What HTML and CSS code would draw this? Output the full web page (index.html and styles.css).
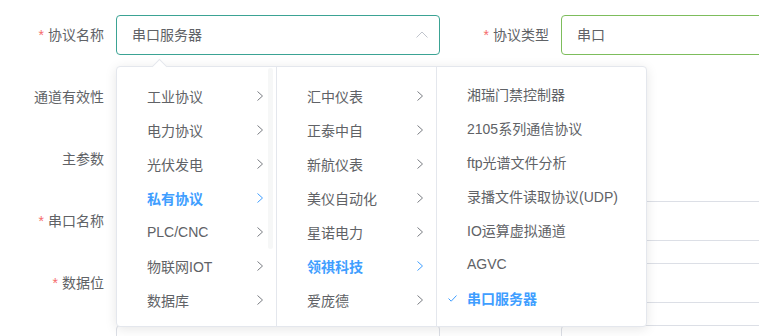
FILE: index.html
```html
<!DOCTYPE html>
<html lang="zh">
<head>
    <meta charset="UTF-8">
    <meta name="viewport" content="width=device-width, initial-scale=1.0">
    <title>协议配置</title>
    <link rel="stylesheet" href="styles.css">
</head>
<body>
    <form class="form">
        <div class="form-row">
            <div class="form-item">
                <label class="label required">协议名称</label>
                <div class="control">
                    <div class="input select is-open">
                        <span class="value">串口服务器</span>
                        <svg class="select-arrow" width="12" height="7" viewBox="0 0 12 7"><polyline points="0.5,6.5 6,1 11.5,6.5" fill="none" stroke="currentColor" stroke-width="1"/></svg>
                    </div>

                    <!-- 级联下拉面板 -->
                    <div class="cascader-panel">
                        <div class="popper-arrow"></div>
                        <ul class="menu">
                            <li class="item"><span>工业协议</span><svg class="chevron" width="6" height="10" viewBox="0 0 6 10"><polyline points="0.5,0.5 5.5,5 0.5,9.5" fill="none" stroke="currentColor" stroke-width="1"/></svg></li>
                            <li class="item"><span>电力协议</span><svg class="chevron" width="6" height="10" viewBox="0 0 6 10"><polyline points="0.5,0.5 5.5,5 0.5,9.5" fill="none" stroke="currentColor" stroke-width="1"/></svg></li>
                            <li class="item"><span>光伏发电</span><svg class="chevron" width="6" height="10" viewBox="0 0 6 10"><polyline points="0.5,0.5 5.5,5 0.5,9.5" fill="none" stroke="currentColor" stroke-width="1"/></svg></li>
                            <li class="item active"><span>私有协议</span><svg class="chevron" width="6" height="10" viewBox="0 0 6 10"><polyline points="0.5,0.5 5.5,5 0.5,9.5" fill="none" stroke="currentColor" stroke-width="1"/></svg></li>
                            <li class="item"><span>PLC/CNC</span><svg class="chevron" width="6" height="10" viewBox="0 0 6 10"><polyline points="0.5,0.5 5.5,5 0.5,9.5" fill="none" stroke="currentColor" stroke-width="1"/></svg></li>
                            <li class="item"><span>物联网IOT</span><svg class="chevron" width="6" height="10" viewBox="0 0 6 10"><polyline points="0.5,0.5 5.5,5 0.5,9.5" fill="none" stroke="currentColor" stroke-width="1"/></svg></li>
                            <li class="item"><span>数据库</span><svg class="chevron" width="6" height="10" viewBox="0 0 6 10"><polyline points="0.5,0.5 5.5,5 0.5,9.5" fill="none" stroke="currentColor" stroke-width="1"/></svg></li>
                            <div class="scroll-thumb"></div>
                        </ul>
                        <ul class="menu">
                            <li class="item"><span>汇中仪表</span><svg class="chevron" width="6" height="10" viewBox="0 0 6 10"><polyline points="0.5,0.5 5.5,5 0.5,9.5" fill="none" stroke="currentColor" stroke-width="1"/></svg></li>
                            <li class="item"><span>正泰中自</span><svg class="chevron" width="6" height="10" viewBox="0 0 6 10"><polyline points="0.5,0.5 5.5,5 0.5,9.5" fill="none" stroke="currentColor" stroke-width="1"/></svg></li>
                            <li class="item"><span>新航仪表</span><svg class="chevron" width="6" height="10" viewBox="0 0 6 10"><polyline points="0.5,0.5 5.5,5 0.5,9.5" fill="none" stroke="currentColor" stroke-width="1"/></svg></li>
                            <li class="item"><span>美仪自动化</span><svg class="chevron" width="6" height="10" viewBox="0 0 6 10"><polyline points="0.5,0.5 5.5,5 0.5,9.5" fill="none" stroke="currentColor" stroke-width="1"/></svg></li>
                            <li class="item"><span>星诺电力</span><svg class="chevron" width="6" height="10" viewBox="0 0 6 10"><polyline points="0.5,0.5 5.5,5 0.5,9.5" fill="none" stroke="currentColor" stroke-width="1"/></svg></li>
                            <li class="item active"><span>领祺科技</span><svg class="chevron" width="6" height="10" viewBox="0 0 6 10"><polyline points="0.5,0.5 5.5,5 0.5,9.5" fill="none" stroke="currentColor" stroke-width="1"/></svg></li>
                            <li class="item"><span>爱庞德</span><svg class="chevron" width="6" height="10" viewBox="0 0 6 10"><polyline points="0.5,0.5 5.5,5 0.5,9.5" fill="none" stroke="currentColor" stroke-width="1"/></svg></li>
                        </ul>
                        <ul class="menu menu-leaf">
                            <li class="item"><span>湘瑞门禁控制器</span></li>
                            <li class="item"><span>2105系列通信协议</span></li>
                            <li class="item"><span>ftp光谱文件分析</span></li>
                            <li class="item"><span>录播文件读取协议(UDP)</span></li>
                            <li class="item"><span>IO运算虚拟通道</span></li>
                            <li class="item"><span>AGVC</span></li>
                            <li class="item active"><svg class="check" width="9" height="7" viewBox="0 0 9 7"><polyline points="0.5,3.5 3.2,6.2 8.5,0.5" fill="none" stroke="currentColor" stroke-width="1"/></svg><span>串口服务器</span></li>
                        </ul>
                    </div>
                </div>
            </div>
            <div class="form-item">
                <label class="label required">协议类型</label>
                <div class="control">
                    <div class="input is-success">串口</div>
                </div>
            </div>
        </div>

        <div class="form-row">
            <div class="form-item">
                <label class="label">通道有效性</label>
                <div class="control"></div>
            </div>
            <div class="form-item"></div>
        </div>

        <div class="form-row">
            <div class="form-item">
                <label class="label">主参数</label>
                <div class="control"></div>
            </div>
            <div class="form-item"></div>
        </div>

        <div class="form-row">
            <div class="form-item">
                <label class="label required">串口名称</label>
                <div class="control"><div class="input"></div></div>
            </div>
            <div class="form-item">
                <label class="label"></label>
                <div class="control"><div class="input"></div></div>
            </div>
        </div>

        <div class="form-row">
            <div class="form-item">
                <label class="label required">数据位</label>
                <div class="control"><div class="input"></div></div>
            </div>
            <div class="form-item">
                <label class="label"></label>
                <div class="control"><div class="input"></div></div>
            </div>
        </div>

        <div class="form-row">
            <div class="form-item">
                <label class="label"></label>
                <div class="control"><div class="input"></div></div>
            </div>
            <div class="form-item">
                <label class="label"></label>
                <div class="control"><div class="input"></div></div>
            </div>
        </div>
    </form>
</body>
</html>
```

FILE: styles.css
```css
body {
    margin: 0;
    padding: 15px 0 0 6px;
    background-color: #fff;
    font-family: "Liberation Sans", "Noto Sans CJK SC", sans-serif;
    font-size: 14px;
    color: #606266;
    overflow: hidden;
}

.form {
    width: 900px;
}

.form-row {
    display: grid;
    grid-template-columns: 434px 434px;
    column-gap: 11px;
    margin-bottom: 22px;
}

.form-item {
    display: flex;
    height: 40px;
}

.label {
    width: 110px;
    flex-shrink: 0;
    box-sizing: border-box;
    padding-right: 12px;
    text-align: right;
    line-height: 40px;
    color: #606266;
}

.label.required::before {
    content: "*";
    color: #f56c6c;
    margin-right: 4px;
}

.control {
    position: relative;
    flex: 1;
}

.input {
    box-sizing: border-box;
    height: 40px;
    line-height: 38px;
    padding: 0 15px;
    border: 1px solid #dcdfe6;
    border-radius: 4px;
    background-color: #fff;
    color: #606266;
}

.select {
    display: flex;
    align-items: center;
    padding-right: 11px;
}

.select .value {
    flex: 1;
}

.select.is-open {
    border-color: #3ba394;
}

.select-arrow {
    color: #c0c4cc;
    margin-top: -1px;
}

.is-success {
    border-color: #7dbd5c;
}

/* 级联面板 */
.cascader-panel {
    position: absolute;
    top: 51px;
    left: 0;
    z-index: 10;
    display: flex;
    background-color: #fff;
    border: 1px solid #e4e7ed;
    border-radius: 4px;
    box-shadow: 0 2px 12px 0 rgba(0, 0, 0, 0.1);
}

.popper-arrow {
    position: absolute;
    top: -6px;
    left: 37px;
    width: 10px;
    height: 10px;
    background-color: #fff;
    border-top: 1px solid #e4e7ed;
    border-left: 1px solid #e4e7ed;
    transform: rotate(45deg);
}

.menu {
    position: relative;
    list-style: none;
    margin: 0;
    width: 160px;
    box-sizing: border-box;
    padding: 12px 0 9px;
    border-right: 1px solid #e4e7ed;
}

.menu-leaf {
    width: 209px;
    padding: 10px 0 11px;
    border-right: none;
}

.item {
    position: relative;
    display: flex;
    align-items: center;
    height: 34px;
    padding: 0 13px 0 30px;
    white-space: nowrap;
    color: #606266;
}

.item span {
    flex: 1;
}

.item.active {
    color: #409eff;
    font-weight: bold;
}

.chevron {
    color: #7a7d83;
}

.item.active .chevron {
    color: #409eff;
}

.check {
    position: absolute;
    left: 11px;
    top: 14px;
    color: #409eff;
}

.scroll-thumb {
    position: absolute;
    top: 1px;
    right: 3px;
    width: 5px;
    height: 181px;
    border-radius: 3px;
    background-color: rgba(144, 147, 153, 0.08);
}
```
